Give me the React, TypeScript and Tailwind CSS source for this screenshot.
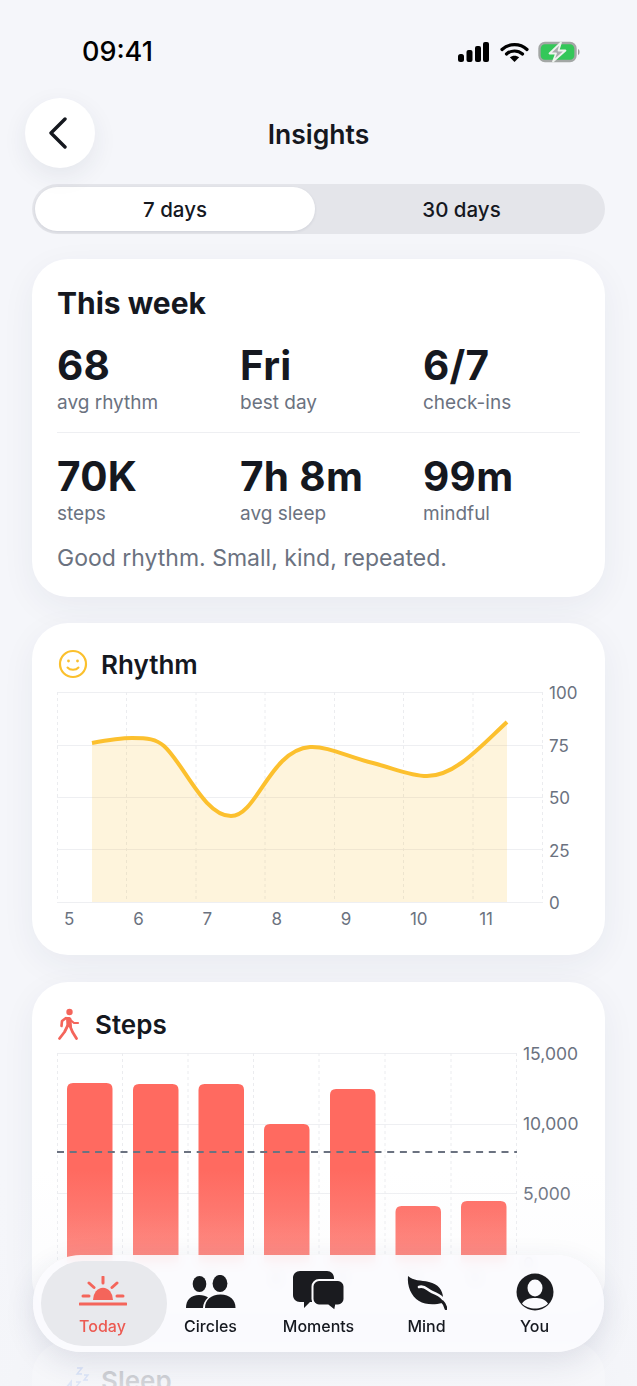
import React from 'react';

const INK = '#15181f';

const stats = [
    [{ value: '68', label: 'avg rhythm' }, { value: 'Fri', label: 'best day' }, { value: '6/7', label: 'check-ins' }],
    [{ value: '70K', label: 'steps' }, { value: '7h 8m', label: 'avg sleep' }, { value: '99m', label: 'mindful' }],
];

const days = ['5', '6', '7', '8', '9', '10', '11'];

// bar x / top, in page coordinates (the svg viewBox matches them)
const stepBars = [
    { x: 67, top: 1083 },
    { x: 133, top: 1084 },
    { x: 198.5, top: 1084 },
    { x: 264, top: 1124 },
    { x: 330, top: 1089 },
    { x: 395.5, top: 1206 },
    { x: 461, top: 1201 },
];

const CURVE = 'M92 743 C108 740 120 738 132 738 C148 738 156 739 164 746 C184 764 204 816 231 816 C257 816 270 750 310 747 C328 746 348 757 373 763 C393 768 410 776 427 776 C455 776 480 747 507 722';

const StatusBar = () => (
    <div className="flex items-center justify-between h-[40px] mt-[32px] pl-[82px] pr-[55px]">
        <span className="text-[27px] leading-[40px] font-medium text-black">09:41</span>
        <svg width="125" height="22" viewBox="0 0 125 22">
            <rect x="1" y="13" width="6" height="8" rx="2.5" fill="#000" />
            <rect x="9.5" y="9" width="6" height="12" rx="2" fill="#000" />
            <rect x="18" y="5" width="6" height="16" rx="2" fill="#000" />
            <rect x="26" y="1" width="6" height="20" rx="2" fill="#000" />
            <path d="M45 8.5 C52 2 63 2 70 8.5" stroke="#000" strokeWidth="3.2" fill="none" strokeLinecap="round" />
            <path d="M49.5 13 C54 9 61 9 65.5 13" stroke="#000" strokeWidth="3.2" fill="none" strokeLinecap="round" />
            <path d="M57.5 21 L52.8 16.3 C55.5 14.2 59.5 14.2 62.2 16.3 Z" fill="#000" />
            <rect x="82.5" y="2" width="36" height="18" rx="5.5" fill="#34c759" stroke="#a3a7a5" strokeWidth="2.4" />
            <path d="M121 8 C123 8.5 123 13.5 121 14 Z" fill="#9a9d9c" />
            <path d="M104 1.5 L92.5 12.5 H99 L96 20.5 L108.5 9.5 H101.5 Z" fill="#a9acae" stroke="#eef3ee" strokeWidth="1.8" strokeLinejoin="round" />
        </svg>
    </div>
);

const Header = () => (
    <div className="relative flex items-center justify-center h-[70px] mt-[26px]">
        <button className="absolute left-[25px] top-0 flex items-center justify-center w-[70px] h-[70px] rounded-full bg-white shadow-[0_8px_24px_rgba(40,50,80,0.08)]">
            <svg width="22" height="32" viewBox="0 0 22 32" className="-ml-[5px]">
                <path d="M18 2 L4 16 L18 30" fill="none" stroke={INK} strokeWidth="3.4" strokeLinecap="round" strokeLinejoin="round" />
            </svg>
        </button>
        <h1 className="pt-[2px] text-[26.5px] leading-[34px] font-semibold" style={{ color: INK }}>Insights</h1>
    </div>
);

const RangeToggle = () => (
    <div className="flex mx-[32px] mt-[16px] h-[50px] p-[3px] rounded-full bg-[#e4e5ea] text-[20.5px] font-medium text-[#15181f]">
        <div className="flex items-center justify-center w-[280px] pt-[2px] rounded-full bg-white shadow-[0_1px_3px_rgba(30,40,70,0.10)]">7 days</div>
        <div className="flex items-center justify-center flex-1 pt-[2px] pl-[6px]">30 days</div>
    </div>
);

const card = 'mx-[32px] rounded-[36px] bg-white shadow-[0_10px_34px_rgba(40,50,90,0.06)]';

const ThisWeek = () => (
    <section className={`${card} mt-[25px] pt-[26px] pb-[24px] px-[25px]`}>
        <h2 className="text-[30px] leading-[36px] font-bold" style={{ color: INK }}>This week</h2>
        {stats.map((row, i) => (
            <div key={i} className={i === 0 ? 'grid grid-cols-3 gap-x-[26px] mt-[23px] pb-[18px] border-b border-[#eeeff2]' : 'grid grid-cols-3 gap-x-[26px] mt-[22px]'}>
                {row.map(s => (
                    <div key={s.label}>
                        <div className="text-[40.5px] leading-[44px] font-bold tracking-[0.3px]" style={{ color: INK }}>{s.value}</div>
                        <div className="mt-[3px] -mb-[1px] text-[19px] leading-[24px] text-[#6b7280]">{s.label}</div>
                    </div>
                ))}
            </div>
        ))}
        <p className="mt-[16px] pt-[1px] -mb-[1px] text-[23px] leading-[32px] text-[#6b7280]">Good rhythm. Small, kind, repeated.</p>
    </section>
);

const RhythmCard = () => {
    const rows = [692, 745, 797, 849, 902];
    const cols = [57.5, 126.5, 196, 265, 334.5, 403.5, 473, 542.5];
    return (
        <section className={`${card} mt-[26px] pt-[23px] pb-[26px] pl-[25px] pr-[25px]`}>
            <div className="flex items-center h-[36px]">
                <svg width="30" height="30" viewBox="0 0 30 30" className="ml-[1px]">
                    <circle cx="15" cy="15" r="13" fill="none" stroke="#fbc02d" strokeWidth="2.2" />
                    <circle cx="10.5" cy="12" r="1.4" fill="#fbc02d" />
                    <circle cx="19.5" cy="12" r="1.4" fill="#fbc02d" />
                    <path d="M9.5 18.5 C12 21.5 18 21.5 20.5 18.5" fill="none" stroke="#fbc02d" strokeWidth="2" strokeLinecap="round" />
                </svg>
                <h2 className="ml-[13px] pt-[2px] text-[26px] leading-[36px] font-semibold" style={{ color: INK }}>Rhythm</h2>
            </div>
            <div className="flex items-start mt-[9px]">
                <svg width="491" height="212" viewBox="57 691 491 212" className="block">
                    {rows.map(y => <line key={y} x1="57" x2="543" y1={y + 0.5} y2={y + 0.5} stroke="#eeeff2" strokeWidth="1" />)}
                    {cols.map(x => <line key={x} x1={x} x2={x} y1="692" y2="902" stroke="#ebecef" strokeWidth="1" strokeDasharray="3 3" />)}
                    <path d={`${CURVE} L507 902 L92 902 Z`} fill="#fcc02e" fillOpacity="0.17" />
                    <path d={CURVE} fill="none" stroke="#fcc02e" strokeWidth="4" />
                </svg>
                <div className="flex flex-col justify-between h-[230px] -mt-[8px] -mb-[10px] ml-[1px] text-[17px] leading-[20px] text-[#6b7280]">
                    {['100', '75', '50', '25', '0'].map(t => <span key={t}>{t}</span>)}
                </div>
            </div>
            <div className="flex pl-[7px] mt-[6px] text-[17px] leading-[20px] text-[#6b7280]">
                {days.map(d => <span key={d} className="w-[69.2px]">{d}</span>)}
            </div>
        </section>
    );
};

const StepsCard = () => {
    const rows = [1053, 1124, 1193, 1263];
    const cols = [57.5, 122.5, 188, 253.5, 319, 385, 451, 516.5];
    return (
        <section className={`${card} mt-[27px] pt-[25px] pb-[26px] px-[25px]`}>
            <div className="flex items-center h-[36px]">
                <svg width="24" height="32" viewBox="0 0 24 32" className="-mt-[2px]">
                    <circle cx="12.5" cy="4" r="3.2" fill="#f4655b" />
                    <path d="M9 9.5 C11.5 8.5 14 9 14.5 11 L15 19 L9.5 19 Z" fill="#f4655b" />
                    <path d="M9 10 L5 13 L4.5 18" fill="none" stroke="#f4655b" strokeWidth="2.6" strokeLinecap="round" strokeLinejoin="round" />
                    <path d="M14 12.5 L17 15 H21" fill="none" stroke="#f4655b" strokeWidth="2.2" strokeLinecap="round" strokeLinejoin="round" />
                    <path d="M10.5 18 L7.5 24 L2.5 30.5" fill="none" stroke="#f4655b" strokeWidth="2.8" strokeLinecap="round" strokeLinejoin="round" />
                    <path d="M13 18 L15.5 24 L19.5 30.5" fill="none" stroke="#f4655b" strokeWidth="2.8" strokeLinecap="round" strokeLinejoin="round" />
                </svg>
                <h2 className="ml-[14px] text-[26px] leading-[36px] font-semibold" style={{ color: INK }}>Steps</h2>
            </div>
            <div className="flex items-start mt-[9px]">
                <svg width="466" height="214" viewBox="57 1052 466 214" className="block">
                    <defs>
                        <linearGradient id="bar" gradientUnits="userSpaceOnUse" x1="0" x2="0" y1="1083" y2="1263">
                            <stop offset="0" stopColor="#ff6a60" />
                            <stop offset="0.7" stopColor="#ff6a60" />
                            <stop offset="1" stopColor="#ff7268" />
                        </linearGradient>
                    </defs>
                    {rows.map(y => <line key={y} x1="57" x2="517" y1={y + 0.5} y2={y + 0.5} stroke="#eeeff2" strokeWidth="1" />)}
                    {cols.map(x => <line key={x} x1={x} x2={x} y1="1053" y2="1263" stroke="#ebecef" strokeWidth="1" strokeDasharray="3 3" />)}
                    {stepBars.map(b => (
                        <path key={b.x} d={`M${b.x} 1263 V${b.top + 6} Q${b.x} ${b.top} ${b.x + 6} ${b.top} H${b.x + 39.5} Q${b.x + 45.5} ${b.top} ${b.x + 45.5} ${b.top + 6} V1263 Z`} fill="url(#bar)" />
                    ))}
                    <line x1="57" x2="517" y1="1152" y2="1152" stroke="#6b7280" strokeWidth="2" strokeDasharray="7 5.7" />
                </svg>
                <div className="flex flex-col justify-between h-[230px] -mt-[8px] -mb-[10px] text-[17.5px] leading-[20px] text-[#6b7280]">
                    {['15,000', '10,000', '5,000', '0'].map(t => <span key={t}>{t}</span>)}
                </div>
            </div>
            <div className="flex pl-[7px] mt-[3px] text-[17px] leading-[20px] text-[#6b7280]">
                {days.map(d => <span key={d} className="w-[65.6px] pl-[10px]">{d}</span>)}
            </div>
        </section>
    );
};

const SleepCard = () => (
    <section className={`${card} mt-[26px] h-[200px] pt-[22px] px-[25px]`}>
        <div className="flex items-center h-[36px]">
            <svg width="30" height="32" viewBox="0 0 30 32" className="ml-[3px]">
                <path d="M3 27 L11 17 V29" fill="none" stroke="#5b8def" strokeWidth="2" />
                <path d="M17 3 H22 L17 9 H22 M24 10 H28 L24 15 H28 M16 17 H20 L16 22 H20" fill="none" stroke="#5b8def" strokeWidth="1.4" />
            </svg>
            <h2 className="ml-[11px] text-[26px] leading-[36px] font-semibold" style={{ color: INK }}>Sleep</h2>
        </div>
    </section>
);

const TodayIcon = () => (
    <svg width="48" height="30" viewBox="0 0 48 30" className="block">
        <path d="M14 24 A9.7 12 0 0 1 34 24 Z" fill="#f4655b" />
        <path d="M1 28 H47" stroke="#f4655b" strokeWidth="3" strokeLinecap="round" />
        <path d="M24 1 V7 M10 7 L15 11.5 M38 7 L33 11.5 M4 20 H10 M38 20 H44" stroke="#f4655b" strokeWidth="3" strokeLinecap="round" />
    </svg>
);

const CirclesIcon = () => (
    <svg width="50" height="34" viewBox="0 0 50 34" className="block">
        <ellipse cx="13.5" cy="9" rx="6.8" ry="8" fill="#1a1b1f" />
        <ellipse cx="34" cy="8.5" rx="7.4" ry="8.6" fill="#1a1b1f" />
        <path d="M0 33 C0 25 5 20 13 20 C17 20 20 21 22 22.5 C19 25 17 29 17 33 Z" fill="#1a1b1f" />
        <path d="M19 33 C19 25 25 19.5 34.5 19.5 C44 19.5 49.5 25 49.5 33 Z" fill="#1a1b1f" />
    </svg>
);

const MomentsIcon = () => (
    <svg width="52" height="42" viewBox="0 0 52 42" className="block">
        <path d="M7 0 H34 C38 0 41 3 41 7 V24 C41 28 38 31 34 31 H17 L11 37 V31 H7 C3 31 0 28 0 24 V7 C0 3 3 0 7 0 Z" fill="#1a1b1f" />
        <path d="M26 9 H45 C48.5 9 51.5 12 51.5 15.5 V28 C51.5 31.5 48.5 34.5 45 34.5 H43 L42 40 L35 34.5 H26 C22.5 34.5 19.5 31.5 19.5 28 V15.5 C19.5 12 22.5 9 26 9 Z" fill="#1a1b1f" stroke="#fbfbfe" strokeWidth="2" />
    </svg>
);

const MindIcon = () => (
    <svg width="40" height="34" viewBox="0 0 40 34" className="block">
        <path d="M1 0 C6 5 14 4 22 6 C31 8 36 14 36 22 C36 24 36 26 35 27 C28 29 18 29 12 25 C4 20 0 10 1 0 Z" fill="#1a1b1f" />
        <path d="M34 24 C36 26 38 29 39 32.5" fill="none" stroke="#1a1b1f" strokeWidth="3" strokeLinecap="round" />
        <path d="M12 11 C18 9 20 14 25 16 C29 17.5 33 19 36 23" fill="none" stroke="#fbfbfe" strokeWidth="2.6" strokeLinecap="round" />
    </svg>
);

const YouIcon = () => (
    <svg width="38" height="38" viewBox="0 0 38 38" className="block">
        <circle cx="19" cy="19" r="18.5" fill="#1a1b1f" />
        <ellipse cx="19" cy="15" rx="7.5" ry="8.5" fill="#fbfbfe" />
        <path d="M6 30.5 C9 26 14 25 19 25 C24 25 29 26 32 30.5 C29 34 24 35.5 19 35.5 C14 35.5 9 34 6 30.5 Z" fill="#fbfbfe" />
    </svg>
);

const tabs = [
    { label: 'Today', icon: <TodayIcon />, pad: 'pt-[21px]', active: true },
    { label: 'Circles', icon: <CirclesIcon />, pad: 'pt-[20px]' },
    { label: 'Moments', icon: <MomentsIcon />, pad: 'pt-[16px]' },
    { label: 'Mind', icon: <MindIcon />, pad: 'pt-[21px]' },
    { label: 'You', icon: <YouIcon />, pad: 'pt-[18px]' },
];

const TabBar = () => (
    <nav className="absolute left-[33px] top-[1255px] flex justify-center w-[571px] h-[97px] rounded-[48px] bg-[#fbfbfe]/90 backdrop-blur-[6px] shadow-[0_10px_30px_rgba(40,50,90,0.12)]">
        {tabs.map(t => (
            <div key={t.label} className="relative flex flex-col items-center w-[108px]">
                {t.active && <div className="absolute -left-[8px] -right-[10px] top-[6px] h-[85px] rounded-[42px] bg-[#e8e9ed]" />}
                <div className={`relative flex justify-center h-[60px] ${t.pad}`}>{t.icon}</div>
                <span className="relative text-[16px] leading-[22px] font-medium" style={{ color: t.active ? '#ec5a52' : INK }}>{t.label}</span>
            </div>
        ))}
    </nav>
);

export default function App() {
    return (
        <div className="relative w-[637px] h-[1386px] overflow-hidden bg-[#f5f6fa] font-['Inter',sans-serif]">
            <StatusBar />
            <Header />
            <RangeToggle />
            <ThisWeek />
            <RhythmCard />
            <StepsCard />
            <SleepCard />
            <div className="absolute left-0 right-0 top-[1170px] h-[216px] bg-[linear-gradient(to_bottom,rgba(244,245,249,0)_0%,rgba(244,245,249,0.2)_40%,rgba(244,245,249,0.8)_88%,rgba(244,245,249,0.86)_100%)]" />
            <TabBar />
        </div>
    );
}
